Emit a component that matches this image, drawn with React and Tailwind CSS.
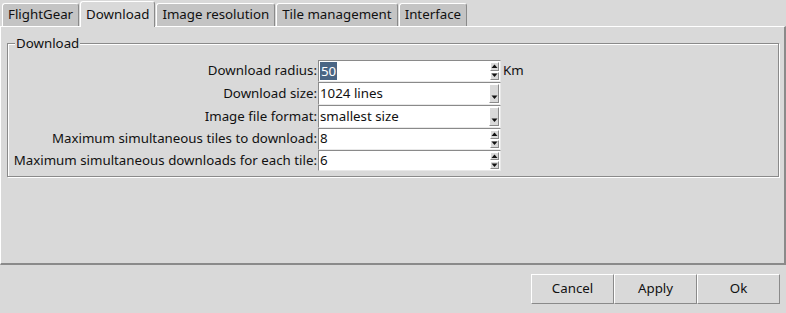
import React from "react";

const font = { fontFamily: '"Noto Sans", "Open Sans", sans-serif' };

function Tab({ label, selected }) {
  if (selected) {
    return (
      <div className="relative z-10 h-[26px] mb-[-1px] px-[5px] flex items-center bg-[#d9d9d9] border-t border-l border-white border-r border-r-[#8a8a8a] rounded-t-[3px] text-[13.3px] text-[#111]">
        {label}
      </div>
    );
  }
  return (
    <div className="h-[23px] px-[5px] flex items-center bg-[#c4c4c4] border-t border-l border-white border-r border-r-[#8a8a8a] rounded-t-[3px] text-[13.3px] text-[#111]">
      {label}
    </div>
  );
}

function Arrow({ up }) {
  return (
    <svg width="7" height="5" viewBox="0 0 7 5" className="block">
      {up ? <path d="M3.5 0.5 L6.5 4 L0.5 4 Z" fill="#111" /> : <path d="M0.5 0.5 L6.5 0.5 L3.5 4 Z" fill="#111" />}
    </svg>
  );
}

function SpinButtons() {
  return (
    <div className="flex flex-col w-[9px] h-full py-[1px] gap-[1px]">
      <div className="flex-1 flex items-center justify-center bg-[#d9d9d9] border-t border-l border-white border-b border-r border-b-[#8a8a8a] border-r-[#8a8a8a]">
        <Arrow up />
      </div>
      <div className="flex-1 flex items-center justify-center bg-[#d9d9d9] border-t border-l border-white border-b border-r border-b-[#8a8a8a] border-r-[#8a8a8a]">
        <Arrow />
      </div>
    </div>
  );
}

function ChoiceButton() {
  return (
    <div className="w-[10px] h-full py-[1px]">
      <div className="h-full flex flex-col items-center justify-end pb-[2px] bg-[#d9d9d9] border-t border-l border-white border-b border-r border-b-[#8a8a8a] border-r-[#8a8a8a]">
        <Arrow />
      </div>
    </div>
  );
}

function Field({ h, children, kind }) {
  return (
    <div
      className={`flex items-stretch w-[183px] bg-white border-t border-l border-[#8a8a8a] border-b border-r border-b-[#e8e8e8] border-r-[#e8e8e8] pr-[1px] ${h}`}
    >
      <div className="flex-1 flex items-center pl-[1px] text-[13.3px] text-[#111]">{children}</div>
      {kind === "spin" ? <SpinButtons /> : <ChoiceButton />}
    </div>
  );
}

function Row({ label, h, kind, children, suffix }) {
  return (
    <div className="flex items-center">
      <div className="w-[310px] text-right pr-[1px] text-[13.3px] text-[#111] whitespace-nowrap">{label}</div>
      <Field h={h} kind={kind}>{children}</Field>
      {suffix && <div className="ml-[2px] text-[13.3px] text-[#111]">{suffix}</div>}
    </div>
  );
}

function Btn({ label }) {
  return (
    <div className="w-[83px] h-[30px] flex items-center justify-center bg-[#d9d9d9] border-t border-l border-white border-b border-r border-b-[#8a8a8a] border-r-[#8a8a8a] text-[13.3px] text-[#111]">
      {label}
    </div>
  );
}

export default function App() {
  return (
    <div className="w-[786px] h-[313px] bg-[#d9d9d9] flex flex-col overflow-hidden" style={font}>
      <div className="h-[26px] flex items-end pl-[2px] gap-[1px]">
        <Tab label="FlightGear" />
        <Tab label="Download" selected />
        <Tab label="Image resolution" />
        <Tab label="Tile management" />
        <Tab label="Interface" />
      </div>
      <div className="h-[239px] border-t border-l border-white border-b-2 border-r-2 border-b-[#8a8a8a] border-r-[#8a8a8a] pt-[16px] pl-[6px] pr-[5px]">
        <div className="relative h-[134px] border border-[#8a8a8a] shadow-[inset_1px_1px_0_white,1px_1px_0_white] pt-[16px]">
          <div className="absolute left-[7px] top-[-9px] bg-[#d9d9d9] px-[1px] text-[13.3px] leading-[16px] text-[#111]">
            Download
          </div>
          <div className="flex flex-col">
            <Row label="Download radius:" h="h-[22px]" kind="spin" suffix="Km">
              <span className="bg-[#4a6584] text-white px-[1px] leading-[18px]">50</span>
            </Row>
            <Row label="Download size:" h="h-[23px]" kind="choice">1024 lines</Row>
            <Row label="Image file format:" h="h-[23px]" kind="choice">smallest size</Row>
            <Row label="Maximum simultaneous tiles to download:" h="h-[22px]" kind="spin">8</Row>
            <Row label="Maximum simultaneous downloads for each tile:" h="h-[21px]" kind="spin">6</Row>
          </div>
        </div>
      </div>
      <div className="flex justify-end pt-[9px] pr-[6px]">
        <Btn label="Cancel" />
        <Btn label="Apply" />
        <Btn label="Ok" />
      </div>
    </div>
  );
}
